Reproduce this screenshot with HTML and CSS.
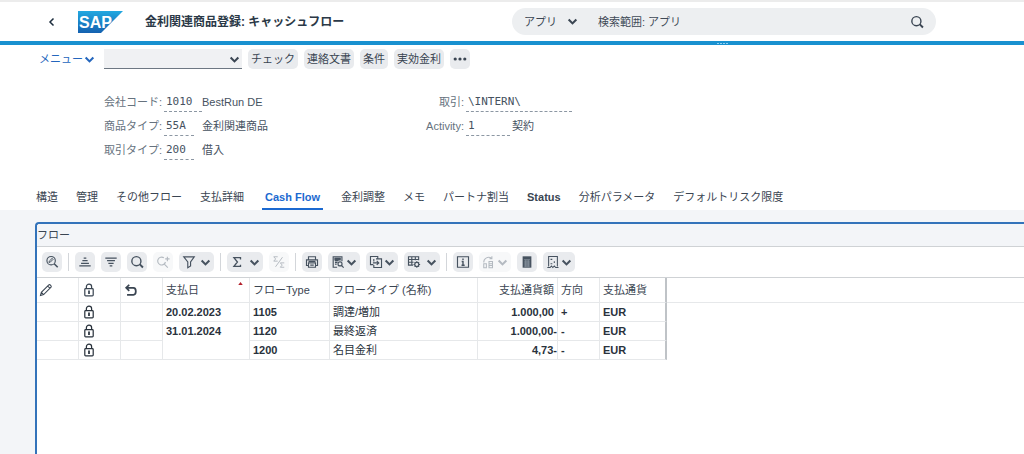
FILE: index.html
```html
<!DOCTYPE html>
<html lang="ja">
<head>
<meta charset="utf-8">
<title>金利関連商品登録: キャッシュフロー</title>
<link rel="stylesheet" href="styles.css">
</head>
<body>
<svg class="sprite" aria-hidden="true">
  <symbol id="chev" viewBox="0 0 10 10"><path d="M1.500 3.200 5 6.700l3.500-3.500" fill="none" stroke="currentColor" stroke-width="1.900"/></symbol>
  <symbol id="mag" viewBox="0 0 16 16"><circle cx="7.300" cy="7" r="5.200" fill="none" stroke="currentColor" stroke-width="1.600"/><path d="m11 10.500 3.800 3.800" stroke="currentColor" stroke-width="2.200"/></symbol>
  <symbol id="lock" viewBox="0 0 16 16"><g fill="none" stroke="currentColor" stroke-width="1.400"><rect x="3.200" y="6.500" width="9.600" height="8.300" rx="1"/><path d="M5 6.500V4.200a3 3 0 0 1 6 0v2.300"/></g><path d="M7 8.700h2v4H7z" fill="currentColor"/></symbol>
</svg>

<header class="shell">
  <div class="shell-start">
    <button class="back" aria-label="戻る"><svg class="i10" viewBox="0 0 10 10"><path d="M6.500 1.500 3 5l3.500 3.500" fill="none" stroke="currentColor" stroke-width="1.500"/></svg></button>
    <svg class="logo" viewBox="0 0 45 22" role="img" aria-label="SAP">
      <defs><linearGradient id="lg" x1="0" y1="0" x2="0" y2="1"><stop offset="0" stop-color="#22a8e0"/><stop offset="1" stop-color="#1461b0"/></linearGradient></defs>
      <path d="M0 0h45L23 22H0z" fill="url(#lg)"/>
      <text x="1" y="17" class="logo-text">SAP</text>
    </svg>
    <h1 class="title">金利関連商品登録: キャッシュフロー</h1>
  </div>
  <form class="search">
    <span class="scope"><select aria-label="検索対象"><option>アプリ</option></select><svg class="i12"><use href="#chev"/></svg></span>
    <input type="text" class="search-input" placeholder="検索範囲: アプリ" aria-label="検索">
    <button type="button" class="search-go" aria-label="検索実行"><svg class="i14"><use href="#mag"/></svg></button>
  </form>
</header>
<div class="bar"><i></i><i></i><i></i><i></i></div>

<nav class="actions">
  <button class="menu">メニュー<svg class="i12"><use href="#chev"/></svg></button>
  <span class="command"><select aria-label="コマンド"><option></option></select><svg class="i12"><use href="#chev"/></svg></span>
  <button class="btn">チェック</button>
  <button class="btn">連絡文書</button>
  <button class="btn">条件</button>
  <button class="btn">実効金利</button>
  <button class="btn" aria-label="その他"><svg class="i14" viewBox="0 0 14 14" fill="currentColor"><circle cx="2.200" cy="7" r="1.600"/><circle cx="7" cy="7" r="1.600"/><circle cx="11.800" cy="7" r="1.600"/></svg></button>
</nav>

<section class="fields">
  <div class="group">
    <div class="field"><label for="bukrs">会社コード:</label><input id="bukrs" class="w38" value="1010" readonly><span>BestRun DE</span></div>
    <div class="field"><label for="ptype">商品タイプ:</label><input id="ptype" class="w30" value="55A" readonly><span>金利関連商品</span></div>
    <div class="field"><label for="ttype">取引タイプ:</label><input id="ttype" class="w30" value="200" readonly><span>借入</span></div>
  </div>
  <div class="group">
    <div class="field wide"><label for="deal">取引:</label><input id="deal" class="w106" value="\INTERN\" readonly></div>
    <div class="field wide"><label for="act">Activity:</label><input id="act" class="w44" value="1" readonly><span>契約</span></div>
  </div>
</section>

<nav class="tabs" role="tablist">
  <button role="tab">構造</button>
  <button role="tab">管理</button>
  <button role="tab">その他フロー</button>
  <button role="tab">支払詳細</button>
  <button role="tab" class="active" aria-selected="true">Cash Flow</button>
  <button role="tab">金利調整</button>
  <button role="tab">メモ</button>
  <button role="tab">パートナ割当</button>
  <button role="tab" class="strong">Status</button>
  <button role="tab">分析パラメータ</button>
  <button role="tab">デフォルトリスク限度</button>
</nav>

<main class="content">
<section class="panel">
  <h2 class="panel-title">フロー</h2>
  <div class="tools">
    <button class="tool" aria-label="詳細"><svg class="i14" viewBox="0 0 16 16" fill="none" stroke="currentColor"><circle cx="7" cy="6.500" r="4.800" stroke-width="1.300"/><path d="m10.500 10 4 4" stroke-width="1.900"/><path d="m4.500 8.500.4-1.500 3.300-3.200 1.100 1.100L6 8.200z" stroke-width="1.100"/></svg></button>
    <span class="sep"></span>
    <button class="tool" aria-label="昇順"><svg class="i14" viewBox="0 0 16 16" fill="none" stroke="currentColor" stroke-width="1.500"><path d="M6.500 3.500h3M5 6.500h6M3.500 9.500h9M1.500 12.500h13"/></svg></button>
    <button class="tool" aria-label="降順"><svg class="i14" viewBox="0 0 16 16" fill="none" stroke="currentColor" stroke-width="1.500"><path d="M1.500 3.500h13M3.500 6.500h9M5 9.500h6M6.500 12.500h3"/></svg></button>
    <button class="tool" aria-label="検索"><svg class="i14"><use href="#mag"/></svg></button>
    <button class="tool" disabled aria-label="次を検索"><svg class="i14" viewBox="0 0 16 16" fill="none" stroke="currentColor" stroke-width="1.300"><path d="M9 3.200A4.500 4.500 0 1 0 10.800 8M9.800 10.800l3.700 3.700M10.500 4.500h5M13 2v5"/></svg></button>
    <button class="tool w35" aria-label="フィルタ"><svg class="i14" viewBox="0 0 16 16" fill="none" stroke="currentColor" stroke-width="1.300"><path d="M2 2.200h12L9.800 8v4.500l-3.200 2V8z"/></svg><svg class="i12"><use href="#chev"/></svg></button>
    <span class="sep"></span>
    <button class="tool w36" aria-label="合計"><svg class="i14" viewBox="0 0 16 16" fill="none" stroke="currentColor" stroke-width="1.500"><path d="M12 5V3H4.500l4 5-4 5H12v-2"/></svg><svg class="i12"><use href="#chev"/></svg></button>
    <button class="tool" disabled aria-label="小計"><svg class="i14" viewBox="0 0 16 16" fill="none" stroke="currentColor" stroke-width="1.100"><path d="M6.500 2H2l2.200 2.500L2 7h4.500M14 9H9.500l2.200 2.500L9.500 14H14M12 2.500 4 13.500"/></svg></button>
    <span class="sep"></span>
    <button class="tool" aria-label="印刷"><svg class="i14" viewBox="0 0 16 16" fill="none" stroke="currentColor" stroke-width="1.300"><path d="M4 5V2h8v3M4 12H1.700V5.500h12.600V12H12"/><path d="M4 9h8v5H4zM4 7.300h8M6 11.500h4"/></svg></button>
    <button class="tool w32" aria-label="表示"><svg class="i14" viewBox="0 0 16 16" fill="none" stroke="currentColor" stroke-width="1.300"><path d="M7 14H2.500V2h10v5M4.500 4.500h6M4.500 6.500h4M4.500 8.500h3M4.500 10.500h2"/><path d="M4.500 3.500h6v2h-6z" fill="currentColor"/><circle cx="10.300" cy="10.200" r="2.300"/><path d="m12 12 2.500 2.500"/></svg><svg class="i12"><use href="#chev"/></svg></button>
    <button class="tool w32" aria-label="エクスポート"><svg class="i14" viewBox="0 0 16 16" fill="none" stroke="currentColor" stroke-width="1.300"><path d="M5 11H1.700V1.700H10V4M8 4.500h6.300v9.800H5.500v-3M5.500 7.500V4.700M4.500 9h6.500M8.800 6.700 11.200 9l-2.400 2.300"/></svg><svg class="i12"><use href="#chev"/></svg></button>
    <button class="tool w36" aria-label="レイアウト"><svg class="i14" viewBox="0 0 16 16" fill="none" stroke="currentColor" stroke-width="1.300"><path d="M7 11.500H1.700V2h11.600v4M1.700 5.200h11.600M1.700 8.300h5.800M5.500 2v9.500M9.500 2v4"/><circle cx="11.200" cy="10.800" r="2.300"/><path d="M11.200 7v1.500M11.200 13v1.700M7.500 10.800H9M13.400 10.800H15M8.700 8.300l1 1M12.800 12.300l1 1M13.800 8.300l-1 1M9.700 12.300l-1 1"/></svg><svg class="i12"><use href="#chev"/></svg></button>
    <span class="sep"></span>
    <button class="tool" aria-label="情報"><svg class="i14" viewBox="0 0 16 16" fill="none" stroke="currentColor" stroke-width="1.300"><path d="M1.700 2h12.600v12H1.700z"/><path d="M8 4v1.800M6.500 7.500H8v4.200M6.300 11.700h3.600" stroke-width="1.600"/></svg></button>
    <button class="tool w32" disabled aria-label="履歴"><svg class="i14" viewBox="0 0 16 16" fill="none" stroke="currentColor" stroke-width="1.200"><path d="M2 8.500a5.500 5.500 0 0 1 9-4.500M11.300 1.500V4.300H8.500M2 10h3v4.500H2zM8 7.500h4v7H8zM8 10h4M8 12h4"/></svg><svg class="i12"><use href="#chev"/></svg></button>
    <button class="tool" aria-label="計算"><svg class="i14" viewBox="0 0 16 16"><path d="M3 1.500h10v13H3z" fill="currentColor"/><path d="M4.500 5.500h7M4.500 8h7M4.500 10.300h7M4.500 12.600h7M6.700 5.500v8M9.300 5.500v8" stroke="#aab3bd" stroke-width=".7"/></svg></button>
    <button class="tool w32" aria-label="伝票"><svg class="i14" viewBox="0 0 16 16" fill="none" stroke="currentColor" stroke-width="1.200"><path d="M3 13V1.700h10V13M1.500 14.300h3.200l1.500-1.800 1.600 1.800 1.700-1.800 1.600 1.800h3.200M5.200 5h2M9.500 7v2M5.200 10h2"/></svg><svg class="i12"><use href="#chev"/></svg></button>
  </div>
  <table class="grid">
    <colgroup><col class="c42"><col class="c42"><col class="c42"><col class="c87"><col class="c80"><col class="c148"><col class="c80"><col class="c42"><col class="c67"><col></colgroup>
    <thead>
      <tr>
        <th aria-label="編集"><svg class="i14" viewBox="0 0 16 16" fill="none" stroke="currentColor" stroke-width="1.200"><path d="m1.700 14.300 1-3.600 8.500-8.500c1.200-1 3.600 1.300 2.600 2.600l-8.500 8.500zM2.700 10.700l2.600 2.600M10 3.500 12.500 6"/></svg></th>
        <th class="mark" aria-label="ロック"><svg class="i14"><use href="#lock"/></svg></th>
        <th class="mark" aria-label="取消"><svg class="i14" viewBox="0 0 16 16" fill="none" stroke="currentColor" stroke-width="2"><path d="M6 2 2.500 5.500 6 9M2.500 5.500h8.300c3.600 0 3.600 8 0 8H3.500"/></svg></th>
        <th><span class="sorted">支払日<svg class="sort" viewBox="0 0 6 4"><path d="M0 4 3 0l3 4z" fill="#b3202c"/></svg></span></th>
        <th>フローType</th><th>フロータイプ (名称)</th><th class="num">支払通貨額</th><th>方向</th><th class="last">支払通貨</th><th class="rest"></th>
      </tr>
    </thead>
    <tbody>
      <tr><td></td><td class="mark"><svg class="i14"><use href="#lock"/></svg></td><td></td><td>20.02.2023</td><td>1105</td><td class="name">調達/増加</td><td class="num">1.000,00</td><td>+</td><td class="last">EUR</td><td class="rest"></td></tr>
      <tr><td></td><td class="mark"><svg class="i14"><use href="#lock"/></svg></td><td></td><td rowspan="2" class="merged">31.01.2024</td><td>1120</td><td class="name">最終返済</td><td class="num neg">1.000,00-</td><td>-</td><td class="last">EUR</td><td class="rest"></td></tr>
      <tr><td></td><td class="mark"><svg class="i14"><use href="#lock"/></svg></td><td></td><td>1200</td><td class="name">名目金利</td><td class="num neg">4,73-</td><td>-</td><td class="last">EUR</td><td class="rest"></td></tr>
    </tbody>
  </table>
</section>
</main>
</body>
</html>
```

FILE: styles.css
```css
* { box-sizing: border-box; }
html { height: 100%; }
body {
  margin: 0;
  min-height: 100%;
  display: flex;
  flex-direction: column;
  background: #fff;
  color: #3a4552;
  font: 11px/16px "Liberation Sans", "Noto Sans CJK JP", sans-serif;
}
button, input, select { font: inherit; color: inherit; margin: 0; padding: 0; border: 0; background: none; }
select { appearance: none; }
svg { display: block; flex: none; }
.sprite { position: absolute; width: 0; height: 0; }
.i10 { width: 10px; height: 10px; }
.i12 { width: 11px; height: 11px; }
.i14 { width: 14px; height: 14px; }

.shell {
  display: grid;
  grid-template-columns: 1fr 1fr;
  align-items: center;
  height: 41px;
  border-top: 2px solid #ececec;
}
.shell-start { display: flex; align-items: center; padding-left: 47px; }
.back { margin-right: 21px; color: #1d2d3e; }
.logo { width: 45px; height: 22px; margin-right: 22px; }
.logo-text { font: bold 16px "Liberation Sans", sans-serif; fill: #fff; }
.title { margin: 0; font-size: 12px; font-weight: 700; color: #2b3947; white-space: nowrap; }
.search {
  display: flex;
  align-items: center;
  height: 27px;
  margin-right: 88px;
  padding: 0 12px;
  border-radius: 14px;
  background: #edeff1;
}
.scope, .command { position: relative; display: flex; align-items: center; }
.scope select { width: 54px; }
.scope svg { position: absolute; right: 0; pointer-events: none; }
.search-input { flex: 1; min-width: 0; margin-left: 20px; outline: 0; }
.search-input::placeholder { color: #3f4a57; opacity: 1; }

.bar { display: flex; align-items: center; gap: 1px; height: 4px; padding-left: 70%; background: #1991d0; }
.bar i { width: 2px; height: 1px; background: #8fd0f2; }

.actions { display: flex; align-items: center; gap: 6px; padding: 4px 39px; }
.menu { display: flex; align-items: center; gap: 1px; width: 59px; color: #2466bd; white-space: nowrap; }
.command select { width: 138px; height: 20px; border-bottom: 1px solid #6d7782; border-radius: 0; background: #f0f1f3; }
.command svg { position: absolute; right: 2px; pointer-events: none; }
.btn { height: 20px; padding: 0 3px; border-radius: 5px; background: #e9ebee; white-space: nowrap; }

.fields { display: flex; padding: 17px 0 27px 104px; }
.group { width: 314px; }
.field { display: grid; grid-template-columns: 58px 36px auto; column-gap: 2px; align-items: center; height: 24px; color: #46525f; }
.field.wide { grid-template-columns: 46px 44px auto; }
.field label { color: #66727e; text-align: right; white-space: nowrap; }
.field input {
  height: 20px;
  padding-left: 2px;
  border-bottom: 1px dashed #8c97a3;
  font-family: "DejaVu Sans Mono", monospace;
  outline: 0;
}
.w38 { width: 38px; }
.w30 { width: 30px; }
.w44 { width: 44px; }
.w106 { width: 106px; }

.tabs { display: flex; gap: 18px; padding: 0 36px; }
.tabs button { height: 21px; padding-bottom: 3px; border-bottom: 2px solid transparent; white-space: nowrap; }
.tabs .strong, .tabs .active { font-weight: 700; }
.tabs .active { padding: 0 3px 3px; color: #1b69d0; border-color: #1b69d0; }

.content { flex: 1; display: flex; padding: 12px 0 0 35px; background: #f3f5f8; }
.panel { flex: 1; min-width: 0; border: solid #3373ba; border-width: 2px 0 0 2px; border-top-left-radius: 4px; background: #fff; }
.panel-title { margin: 0; height: 23px; padding-top: 3px; font-size: 11px; font-weight: 400; border-bottom: 1px solid #cfd2d5; background: #f3f5f8; border-top-left-radius: 3px; }
.tools { display: flex; align-items: center; gap: 6px; height: 31px; padding-left: 5px; border-bottom: 1px solid #cfd2d5; }
.tool { display: flex; align-items: center; justify-content: center; width: 20px; height: 20px; border-radius: 5px; background: #e9ebee; color: #46525f; }
.tool:disabled { background: #f7f8f9; color: #b4bac1; }
.w35, .w36, .w32 { justify-content: space-between; padding: 0 3px; }
.w35 { width: 35px; }
.w36 { width: 36px; }
.w32 { width: 32px; }
.sep { width: 1px; height: 18px; background: #d3d6da; }

.grid { width: 100%; table-layout: fixed; border-collapse: separate; border-spacing: 0; }
.c42 { width: 42px; }
.c87 { width: 87px; }
.c80 { width: 80px; }
.c148 { width: 148px; }
.c67 { width: 67px; }
.grid th, .grid td { padding: 0 3px; text-align: left; white-space: nowrap; border-right: 1px solid #e6e8ea; border-bottom: 1px solid #e6e8ea; }
.grid th { height: 25px; font-weight: 400; }
.grid th:first-child { padding-left: 2px; }
.grid td { height: 19px; font-weight: 700; color: #29323c; }
.grid .name { font-weight: 400; }
.grid .num { text-align: right; }
.grid .neg { padding-right: 0; }
.grid .merged { vertical-align: top; padding-top: 1px; }
.grid .last { border-right: 2px solid #bfc3c7; }
.grid .rest { border-right: 0; }
.grid td.rest { border-bottom: 0; }
.sorted { display: flex; justify-content: space-between; }
.sort { width: 5px; height: 3px; margin-right: 3px; }
```
